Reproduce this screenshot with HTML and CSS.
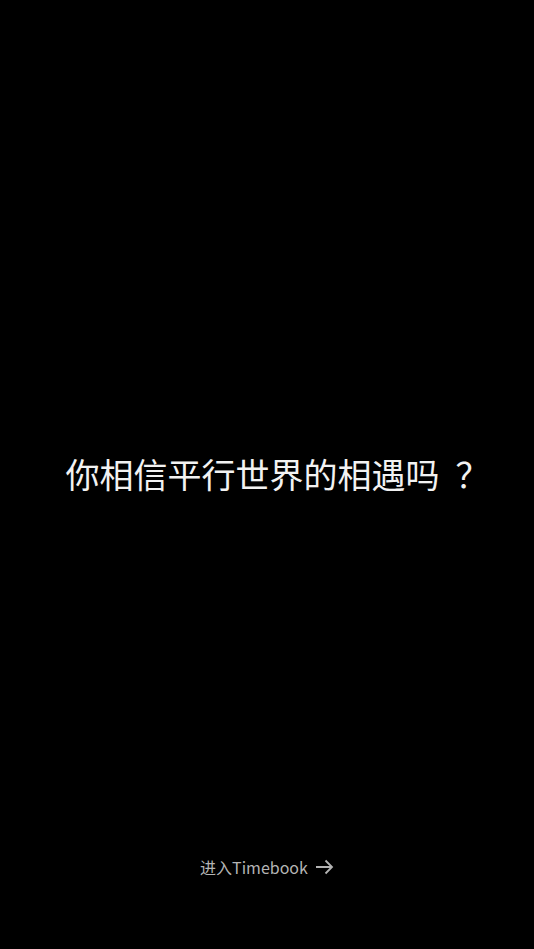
FILE: index.html
```html
<!DOCTYPE html>
<html lang="zh-CN">
<head>
<meta charset="utf-8">
<link rel="stylesheet" href="styles.css">
</head>
<body>
<main class="page">
  <h1 class="title">你相信平行世界的相遇吗<span class="qmark">？</span></h1>
  <a class="enter" href="#">进入Timebook
    <svg class="arrow" width="19" height="16" viewBox="0 0 19 16"><path d="M1 8H17M10.5 1.5L17 8L10.5 14.5" fill="none" stroke="#b4b4b4" stroke-width="1.8"/></svg>
  </a>
</main>
</body>
</html>
```

FILE: styles.css
```css
html, body { margin: 0; padding: 0; background: #000; }
.page {
  height: 949px;
  display: flex;
  flex-direction: column;
  align-items: center;
}
.title {
  margin: 454px 0 0 0;
  padding-left: 21px;
  white-space: nowrap;
  font-family: "Noto Sans CJK SC", sans-serif;
  font-weight: 400;
  font-size: 34px;
  line-height: 40px;
  color: #f2f2f2;
}
.qmark {
  margin-left: 16px;
}
.enter {
  margin-top: 362px;
  display: flex;
  align-items: center;
  gap: 7px;
  font-family: "Noto Sans CJK SC", sans-serif;
  font-size: 16px;
  line-height: 22px;
  color: #b4b4b4;
  text-decoration: none;
}
.arrow { display: block; }
```
